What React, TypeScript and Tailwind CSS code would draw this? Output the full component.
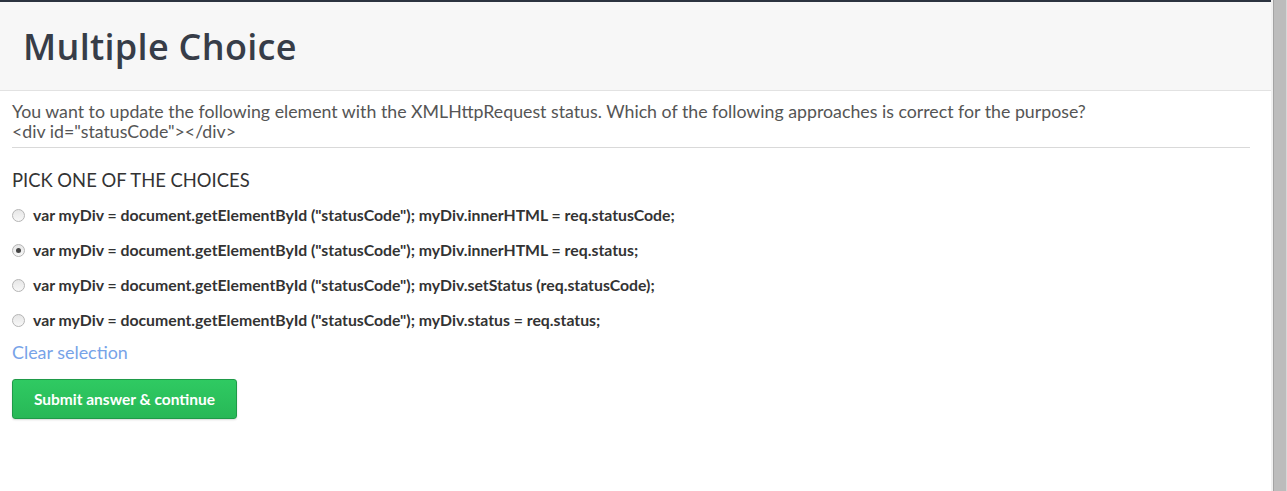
const choices = [
  'var myDiv = document.getElementById ("statusCode"); myDiv.innerHTML = req.statusCode;',
  'var myDiv = document.getElementById ("statusCode"); myDiv.innerHTML = req.status;',
  'var myDiv = document.getElementById ("statusCode"); myDiv.setStatus (req.statusCode);',
  'var myDiv = document.getElementById ("statusCode"); myDiv.status = req.status;',
];

function Radio({ checked }: { checked: boolean }) {
  return (
    <span className="w-[13px] h-[13px] rounded-full border border-[#b5b5b5] bg-gradient-to-b from-[#e6e6e6] to-[#f8f8f8] flex items-center justify-center shrink-0">
      {checked && <span className="w-[5px] h-[5px] rounded-full bg-[#444]" />}
    </span>
  );
}

export default function App() {
  return (
    <div className="flex h-[491px] w-full bg-white font-['Lato',sans-serif] overflow-hidden">
      <div className="flex-1 flex flex-col">
        <div className="h-[2px] bg-[#2c3440]" />
        <div className="h-[89px] bg-[#f7f7f7] border-b border-[#e2e2e2] flex items-center pl-[23px]">
          <h1 className="font-['Open_Sans',sans-serif] font-semibold text-[36px] text-[#373d48] tracking-[0.3px] pt-[1px]">
            Multiple Choice
          </h1>
        </div>
        <div className="pl-3 pr-[21px]">
          <p className="mt-[10px] text-[17.75px] leading-[20px] text-[#555]">
            You want to update the following element with the XMLHttpRequest status. Which of the following approaches is correct for the purpose?
            <br />
            {'<div id="statusCode"></div>'}
          </p>
          <div className="mt-[6px] h-px bg-[#d9d9d9]" />
          <h2 className="mt-[22px] text-[18.4px] leading-[20px] text-[#333] uppercase">Pick one of the choices</h2>
          <div className="mt-[15px] flex flex-col gap-[15px]">
            {choices.map((c, i) => (
              <label key={c} className="flex items-center gap-[8px] h-[20px]">
                <Radio checked={i === 1} />
                <span className="text-[15.8px] font-bold text-[#333] -mt-[1px]">{c}</span>
              </label>
            ))}
          </div>
          <a className="block mt-[12px] text-[17.9px] leading-[20px] text-[#77a3e8]">Clear selection</a>
          <button className="mt-[17px] h-[40px] w-[225px] pt-[2px] rounded-[3px] border border-[#1f9a48] bg-gradient-to-b from-[#2fca62] to-[#28b857] text-white text-[15.5px] font-bold shadow-[0_1px_2px_rgba(0,0,0,0.15)]">
            Submit answer &amp; continue
          </button>
        </div>
      </div>
      <div className="w-[16px] flex shrink-0">
        <div className="w-[2px] bg-[#f0f0f0]" />
        <div className="w-[1px] bg-[#a3a3a3]" />
        <div className="flex-1 bg-[#bcbcbc]" />
        <div className="w-[1px] bg-[#d8d8d8]" />
      </div>
    </div>
  );
}
